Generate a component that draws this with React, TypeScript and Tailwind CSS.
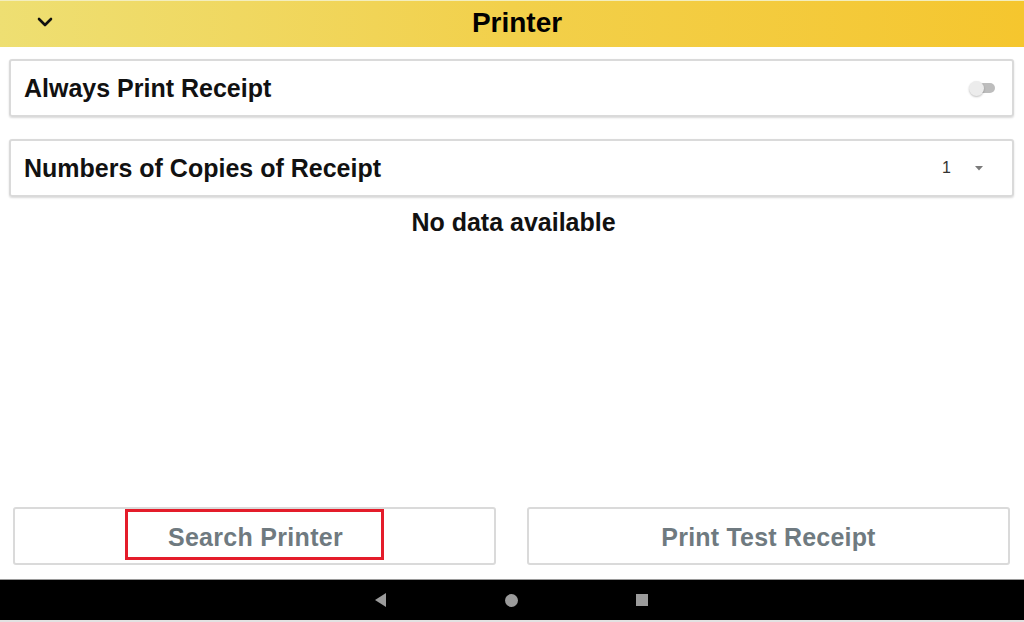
import React from "react";

export default function App() {
  return (
    <div
      className="w-[1024px] h-[622px] flex flex-col bg-white overflow-hidden"
      style={{ fontFamily: '"Liberation Sans", Arial, sans-serif' }}
    >
      {/* Header */}
      <div className="relative h-[47px] shrink-0 flex items-center justify-center bg-gradient-to-r from-[#eedf72] via-[#f2d04a] to-[#f5c62e] border-t border-[#f3eebd]">
        <div className="absolute left-[37px] top-[15px]">
          <svg width="16" height="12" viewBox="0 0 16 12">
            <path d="M2 3 L8 9 L14 3" fill="none" stroke="#111" strokeWidth="2.6" strokeLinecap="round" strokeLinejoin="round" />
          </svg>
        </div>
        <div className="text-[28px] font-bold text-black pl-[10px] pb-[2px] leading-none">Printer</div>
      </div>

      {/* Content */}
      <div className="flex-1 flex flex-col px-[9px] pr-[10px]">
        <div className="mt-[12px] h-[58px] border-2 border-[#dadada] rounded-[3px] shadow-[0_1px_2px_rgba(0,0,0,0.15)] flex items-center pl-[13px] pr-[17px]">
          <span className="text-[25px] font-bold text-[#111] flex-1 leading-none pt-[1px]">Always Print Receipt</span>
          <div className="relative w-[26px] h-[14px] flex items-center">
            <div className="absolute left-[6px] right-0 h-[10px] rounded-full bg-[#bdbdbd]" />
            <div className="absolute left-0 w-[15px] h-[15px] rounded-full bg-[#ececec] shadow-[0_1px_2px_rgba(0,0,0,0.25)]" />
          </div>
        </div>

        <div className="mt-[22px] h-[58px] border-2 border-[#dadada] rounded-[3px] shadow-[0_1px_2px_rgba(0,0,0,0.15)] flex items-center pl-[13px] pr-[29px]">
          <span className="text-[25px] font-bold text-[#111] flex-1 leading-none pt-[1px]">Numbers of Copies of Receipt</span>
          <span className="text-[16px] text-[#333] mr-[24px]">1</span>
          <svg width="8" height="5" viewBox="0 0 8 5">
            <path d="M0 0 L8 0 L4 4.5 Z" fill="#7a7a7a" />
          </svg>
        </div>

        <div className="mt-[13px] text-center text-[25px] font-bold text-[#111] pl-[4px] leading-none">No data available</div>

        <div className="flex-1" />

        <div className="flex gap-[31px] px-[4px] mb-[14px]">
          <div className="relative flex-1 h-[58px] border-2 border-[#dadada] rounded-[3px] flex items-center justify-center">
            <span className="text-[25px] font-bold text-[#6f7a80] tracking-[0.3px] pl-[2px] pt-[3px]">Search Printer</span>
            <div className="absolute left-[110px] top-0 w-[259px] h-[51px] border-[3px] border-[#e41c2a]" />
          </div>
          <div className="flex-1 h-[58px] border-2 border-[#dadada] rounded-[3px] flex items-center justify-center">
            <span className="text-[25px] font-bold text-[#6f7a80] tracking-[0.2px] pt-[3px]">Print Test Receipt</span>
          </div>
        </div>
      </div>

      {/* Nav bar */}
      <div className="h-[43px] shrink-0 bg-black border-t border-[#9a9a9a] border-b-2 border-b-[#e2e2e2] flex items-center justify-center gap-[118px] pr-[2px]">
        <svg width="13" height="14" viewBox="0 0 13 14">
          <path d="M12 0 L12 14 L1 7 Z" fill="#9b9b9b" />
        </svg>
        <div className="w-[13px] h-[13px] rounded-full bg-[#9b9b9b]" />
        <div className="w-[12px] h-[12px] bg-[#9b9b9b]" />
      </div>
    </div>
  );
}
